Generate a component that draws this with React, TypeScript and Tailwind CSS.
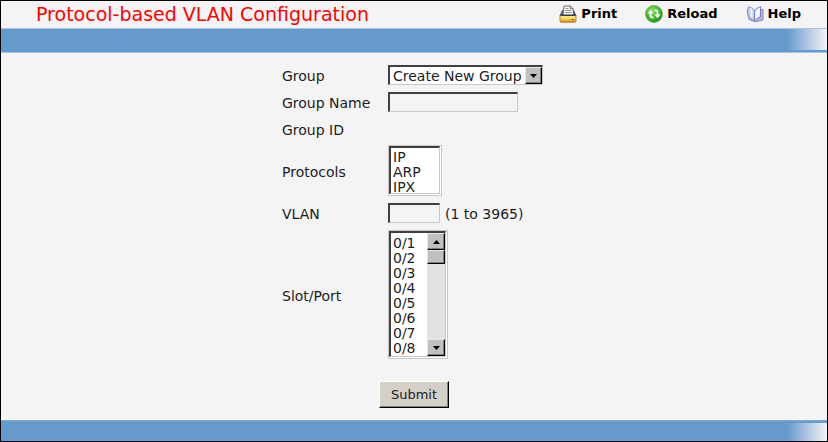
import type { ReactNode } from "react";

const protocols = ["IP", "ARP", "IPX"];
const ports = Array.from({ length: 24 }, (_, i) => `0/${i + 1}`);

const sunken =
  "rounded-none border border-t-2 border-l-2 border-t-[#404040] border-l-[#404040] border-r-[#c8c8c8] border-b-[#c8c8c8] outline-none";
const raised =
  "border border-t-[#e8e8e8] border-l-[#e8e8e8] border-r-black border-b-black shadow-[inset_-1px_-1px_0_#808080] bg-[#c0c0c0]";
const optionStyle = "h-[15px] min-h-0 p-0 pl-[2px] leading-[15px]";

function PrintIcon() {
  return (
    <svg width="18" height="18" viewBox="0 0 18 18" aria-hidden="true">
      <defs>
        <linearGradient id="tray" x1="0" y1="0" x2="0" y2="1">
          <stop offset="0" stopColor="#ffe98a" />
          <stop offset="0.45" stopColor="#fbd860" />
          <stop offset="1" stopColor="#cf8a1c" />
        </linearGradient>
      </defs>
      <path d="M3.5 5.5 1 11h16l-2.500-5.500z" fill="#5f75a6" stroke="#2e3d63" />
      <path d="M4 10 5 1h6.500l2.500 2.500.6 6.500z" fill="#fbfbf6" stroke="#5b5b5b" strokeWidth="0.9" />
      <path d="M11.300 1v2.800H14" fill="#d5d5d5" stroke="#5b5b5b" strokeWidth="0.8" />
      <path d="M6.500 3.500h3M6.200 5.500h6M6 7.500h6.500" stroke="#8f8f8f" />
      <path d="M1 10.500h16v5.500q0 1.200-1.200 1.200H2.200Q1 17.200 1 16z" fill="url(#tray)" stroke="#a8701a" strokeWidth="0.8" />
      <path d="M1.500 10.300h15" stroke="#2e3d63" strokeWidth="1.300" />
      <path d="M12.500 14.500h2.500" stroke="#c8501a" />
    </svg>
  );
}

function ReloadIcon() {
  return (
    <svg width="18" height="18" viewBox="0 0 18 18" aria-hidden="true">
      <defs>
        <radialGradient id="ball" cx="0.4" cy="0.3" r="0.75">
          <stop offset="0" stopColor="#8ade5c" />
          <stop offset="0.5" stopColor="#45bd2e" />
          <stop offset="1" stopColor="#1e8a18" />
        </radialGradient>
      </defs>
      <circle cx="9" cy="9" r="8.5" fill="url(#ball)" stroke="#5aa850" strokeWidth="0.7" />
      <path d="M2.500 8.400 5.500 4.800l3 3.600z" fill="#fff" />
      <path d="M5.500 8v3q0 1.500 1.500 1.500h1.500" fill="none" stroke="#fff" strokeWidth="1.800" />
      <path d="M9.500 9.600 12.500 13.200l3-3.600z" fill="#fff" />
      <path d="M12.500 10V7q0-1.500-1.500-1.500H9.500" fill="none" stroke="#fff" strokeWidth="1.800" />
    </svg>
  );
}

function HelpIcon() {
  return (
    <svg width="18" height="18" viewBox="0 0 18 18" aria-hidden="true">
      <defs>
        <linearGradient id="leftLeaf" x1="0" y1="0" x2="1" y2="0">
          <stop offset="0" stopColor="#9db2e2" />
          <stop offset="0.6" stopColor="#e4ebfc" />
          <stop offset="1" stopColor="#b4c2ea" />
        </linearGradient>
        <linearGradient id="rightLeaf" x1="0" y1="0" x2="1" y2="1">
          <stop offset="0" stopColor="#c9d3f4" />
          <stop offset="0.5" stopColor="#fbfbff" />
          <stop offset="1" stopColor="#c4c2ea" />
        </linearGradient>
      </defs>
      <path d="M1 5 3 14.500l6 2.300 8-1.800V4.500h-2" fill="#b9bae4" stroke="#8583c2" />
      <path d="M2.500 1.500Q6.500 2 8.500 6.500V16Q6.500 13 2.500 12.500 0 6 2.500 1.500z" fill="url(#leftLeaf)" stroke="#8fa0d4" />
      <path d="M8.500 6.500Q9.500 3.500 14.500 1.500V12Q10 13.500 8.500 16z" fill="url(#rightLeaf)" stroke="#7780bd" />
      <path d="M4.500 3.500q1.500 3.500 1 8" fill="none" stroke="#fff" strokeWidth="0.8" />
    </svg>
  );
}

function Tool({ icon, children }: { icon: ReactNode; children: ReactNode }) {
  return (
    <a href="#" className="flex items-center gap-1 text-[13px] leading-4 font-bold text-black">
      {icon}
      {children}
    </a>
  );
}

function Arrow({ up = false }: { up?: boolean }) {
  return (
    <svg width="7" height="4" viewBox="0 0 7 4" aria-hidden="true">
      <path d={up ? "M0 4h7L3.5 0z" : "M0 0h7L3.5 4z"} fill="#000" />
    </svg>
  );
}

function Label({ htmlFor, children }: { htmlFor: string; children: ReactNode }) {
  return (
    <label htmlFor={htmlFor} className="pt-[2px] leading-4">
      {children}
    </label>
  );
}

export default function App() {
  return (
    <div className="flex min-h-screen flex-col border border-black bg-[#f4f4f4] font-['Verdana','DejaVu_Sans',sans-serif] text-[14px] text-[#1c1c1c]">
      <header>
        <div className="flex h-[27px] items-center justify-between pr-[26px] pb-[2px] pl-[35px]">
          <h1 className="text-[19px] leading-6 whitespace-nowrap text-[#ff0000]">Protocol-based VLAN Configuration</h1>
          <nav className="flex items-center gap-7">
            <Tool icon={<PrintIcon />}>Print</Tool>
            <Tool icon={<ReloadIcon />}>Reload</Tool>
            <Tool icon={<HelpIcon />}>Help</Tool>
          </nav>
        </div>
        <div className="flex h-[25px] justify-end border-y border-[#a9c5e2] bg-[#6699cc] pb-[2px]">
          <div className="w-10 bg-linear-to-r from-[#6699cc] to-[#f4f4f4]" />
        </div>
      </header>

      <main className="flex grow flex-col items-center pt-3 pb-3">
        <form className="flex flex-col items-center" onSubmit={(e) => e.preventDefault()}>
          <div className="grid grid-cols-[106px_158px] items-center gap-y-[7px]">
            <Label htmlFor="group">Group</Label>
            <div className="relative w-[155px]">
              <select
                id="group"
                className={`block h-5 w-full appearance-none bg-white pt-px pl-[3px] leading-4 ${sunken} border-r-[#404040]`}
              >
                <option>Create New Group</option>
              </select>
              <span
                className={`pointer-events-none absolute top-[2px] right-px bottom-px flex w-[17px] items-center justify-center ${raised}`}
              >
                <Arrow />
              </span>
            </div>

            <Label htmlFor="name">Group Name</Label>
            <input id="name" type="text" className={`h-5 w-[130px] bg-transparent px-1 ${sunken}`} />

            <span className="h-[19px] leading-[22px]">Group ID</span>
            <span />

            <Label htmlFor="protocols">Protocols</Label>
            <div className="w-[54px] border border-[#c8c8c8] bg-white pr-px pb-px">
              <select
                id="protocols"
                multiple
                size={3}
                className={`block h-[48px] w-full overflow-hidden bg-white pt-px leading-[15px] [scrollbar-width:none] ${sunken}`}
              >
                {protocols.map((p) => (
                  <option key={p} className={optionStyle}>
                    {p}
                  </option>
                ))}
              </select>
            </div>

            <Label htmlFor="vlan">VLAN</Label>
            <div className="flex items-center gap-[5px]">
              <input id="vlan" type="text" className={`h-5 w-[52px] bg-transparent px-1 ${sunken}`} />
              <span className="pt-[2px] leading-4">(1 to 3965)</span>
            </div>

            <Label htmlFor="ports">Slot/Port</Label>
            <div className="w-[60px] border border-[#c8c8c8] bg-white pr-px pb-px">
              <div className={`flex h-[126px] ${sunken}`}>
                <select
                  id="ports"
                  multiple
                  size={8}
                  className="block h-full min-w-0 grow overflow-y-auto rounded-none border-0 bg-white pt-[2px] leading-[15px] outline-none [scrollbar-width:none]"
                >
                  {ports.map((p) => (
                    <option key={p} className={optionStyle}>
                      {p}
                    </option>
                  ))}
                </select>
                <div aria-hidden="true" className="flex w-[18px] shrink-0 flex-col bg-[#e2e2e2]">
                  <span className={`flex h-[17px] items-center justify-center ${raised}`}>
                    <Arrow up />
                  </span>
                  <span className={`h-[14px] ${raised}`} />
                  <span className="grow" />
                  <span className={`flex h-[17px] items-center justify-center ${raised}`}>
                    <Arrow />
                  </span>
                </div>
              </div>
            </div>
          </div>

          <button
            type="submit"
            className="mt-[22px] h-[27px] w-[70px] border border-t-white border-r-black border-b-black border-l-white bg-[#d4d0c8] text-[13px] leading-4 shadow-[inset_-1px_-1px_0_#808080]"
          >
            Submit
          </button>
        </form>
      </main>

      <footer className="flex h-[21px] justify-end border-t border-[#7fabd6] bg-[#6699cc] pt-[2px]">
        <div className="w-10 bg-linear-to-r from-[#6699cc] to-[#f4f4f4]" />
      </footer>
    </div>
  );
}
